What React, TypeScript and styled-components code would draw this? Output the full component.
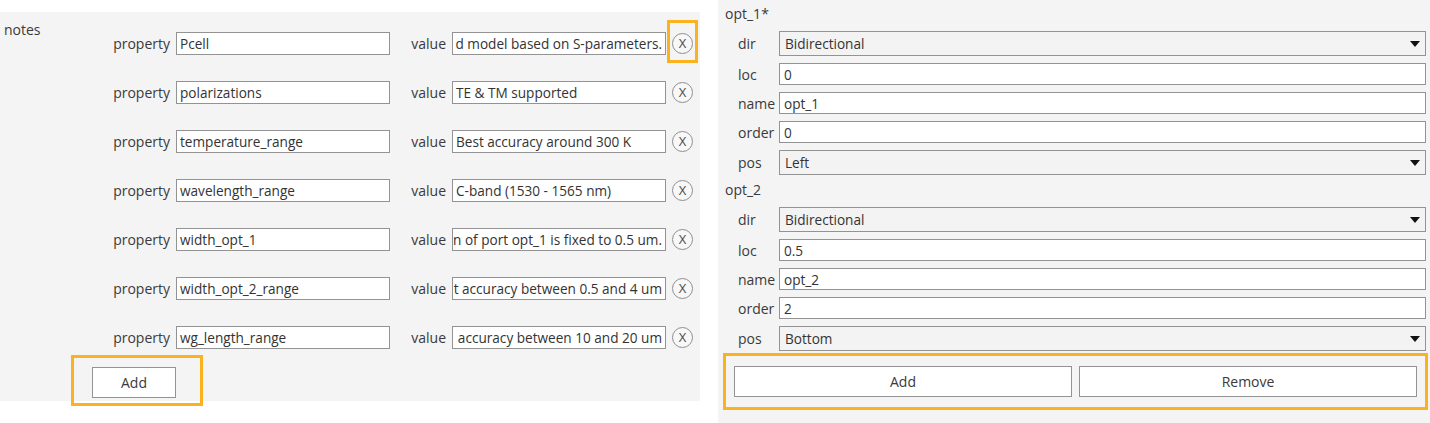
import styled, { createGlobalStyle } from "styled-components";

const GlobalStyle = createGlobalStyle`
  body {
    margin: 0;
    background: #ffffff;
    font-family: "Open Sans", "Liberation Sans", sans-serif;
    color: #333333;
  }
`;

// long values are shown scrolled to their end, as the line edit keeps the caret there
const notes = [
  { property: "Pcell", value: "d model based on S-parameters.", scrolled: true, marked: true },
  { property: "polarizations", value: "TE & TM supported" },
  { property: "temperature_range", value: "Best accuracy around 300 K" },
  { property: "wavelength_range", value: "C-band (1530 - 1565 nm)" },
  { property: "width_opt_1", value: "n of port opt_1 is fixed to 0.5 um.", scrolled: true },
  { property: "width_opt_2_range", value: "t accuracy between 0.5 and 4 um", scrolled: true },
  { property: "wg_length_range", value: "accuracy between 10 and 20 um", scrolled: true },
];

const ports = [
  { name: "opt_1", dirty: true, loc: "0", order: "0", pos: "Left" },
  { name: "opt_2", dirty: false, loc: "0.5", order: "2", pos: "Bottom" },
];

type NoteRow = { property: string; value: string; scrolled?: boolean; marked?: boolean };

function RemoveButton({ marked }: { marked?: boolean }) {
  return (
    <Marked>
      <SRoundButton type="button">X</SRoundButton>
      {marked && <SMark $top={13} $right={5} $bottom={9} $left={5} />}
    </Marked>
  );
}

function NotesPanel() {
  return (
    <SNotesPanel>
      <SNotesBody>
        <SSectionLabel>notes</SSectionLabel>
        <SNotesGrid>
          {notes.map((n: NoteRow) => (
            <NoteLine key={n.property} {...n} />
          ))}
        </SNotesGrid>
      </SNotesBody>
      <SNotesFooter>
        <Marked>
          <SPlainButton type="button" $width={84}>Add</SPlainButton>
          <SMark $top={12} $right={27} $bottom={8} $left={21} />
        </Marked>
      </SNotesFooter>
    </SNotesPanel>
  );
}

function NoteLine({ property, value, scrolled, marked }: NoteRow) {
  return (
    <>
      <SRowLabel>property</SRowLabel>
      <SField>
        <SFieldText>{property}</SFieldText>
      </SField>
      <SRowLabel>value</SRowLabel>
      <SField $scrolled={scrolled}>
        <SFieldText>{value}</SFieldText>
      </SField>
      <RemoveButton marked={marked} />
    </>
  );
}

function PortSection({ name, dirty, loc, order, pos }: (typeof ports)[number]) {
  return (
    <SPortSection>
      <SPortTitle>{name}{dirty ? "*" : ""}</SPortTitle>
      <SPortGrid>
        <SPortLabel>dir</SPortLabel>
        <SSelect>
          <SFieldText>Bidirectional</SFieldText>
          <SArrow />
        </SSelect>
        <SPortLabel>loc</SPortLabel>
        <SPortField><SFieldText>{loc}</SFieldText></SPortField>
        <SPortLabel>name</SPortLabel>
        <SPortField><SFieldText>{name}</SFieldText></SPortField>
        <SPortLabel>order</SPortLabel>
        <SPortField><SFieldText>{order}</SFieldText></SPortField>
        <SPortLabel>pos</SPortLabel>
        <SSelect>
          <SFieldText>{pos}</SFieldText>
          <SArrow />
        </SSelect>
      </SPortGrid>
    </SPortSection>
  );
}

function PortsPanel() {
  return (
    <SPortsPanel>
      {ports.map((p) => (
        <PortSection key={p.name} {...p} />
      ))}
      <SPortActions>
        <SPlainButton type="button">Add</SPlainButton>
        <SPlainButton type="button">Remove</SPlainButton>
        <SMark $top={13} $right={11} $bottom={13} $left={11} />
      </SPortActions>
    </SPortsPanel>
  );
}

export default function App() {
  return (
    <>
      <GlobalStyle />
      <SPage>
        <NotesPanel />
        <PortsPanel />
      </SPage>
    </>
  );
}

const SPage = styled.div`
  display: flex;
  align-items: flex-start;
  gap: 18px;
  width: 1430px;
  height: 423px;
  overflow: hidden;
`;

const SNotesPanel = styled.div`
  box-sizing: border-box;
  width: 700px;
  height: 389px;
  margin-top: 12px;
  padding: 9px 0 0 4px;
  background: #f4f4f4;
  font-size: 14px;
`;

const SNotesBody = styled.div`
  display: flex;
`;

const SSectionLabel = styled.div`
  width: 96px;
  line-height: 18px;
  color: #3a3a3a;
`;

const SNotesGrid = styled.div`
  display: grid;
  grid-template-columns: 70px 214px 50px 214px 21px;
  grid-auto-rows: 23px;
  column-gap: 6px;
  row-gap: 26px;
  align-items: center;
  padding-top: 11px;
`;

const SRowLabel = styled.span`
  justify-self: end;
  color: #3a3a3a;
  white-space: nowrap;
`;

const SField = styled.div<{ $scrolled?: boolean }>`
  box-sizing: border-box;
  display: flex;
  align-items: center;
  justify-content: ${(p) => (p.$scrolled ? "flex-end" : "flex-start")};
  height: 23px;
  padding: ${(p) => (p.$scrolled ? "0 3px 0 1px" : "0 3px")};
  overflow: hidden;
  background: #ffffff;
  border: 1px solid #939393;
`;

const SFieldText = styled.span`
  flex: none;
  white-space: nowrap;
  font-size: 13.6px;
  color: #333333;
`;

const Marked = styled.div`
  position: relative;
  display: flex;
`;

// orange highlight frame laid over a control
const SMark = styled.div<{ $top: number; $right: number; $bottom: number; $left: number }>`
  position: absolute;
  top: -${(p) => p.$top}px;
  right: -${(p) => p.$right}px;
  bottom: -${(p) => p.$bottom}px;
  left: -${(p) => p.$left}px;
  border: 3px solid #fbb21f;
  pointer-events: none;
`;

const SRoundButton = styled.button`
  box-sizing: border-box;
  width: 21px;
  height: 21px;
  padding: 0;
  border-radius: 50%;
  border: 1px solid #8e8e8e;
  background: #f8f8f8;
  color: #4a4a4a;
  font-family: inherit;
  font-size: 13px;
  line-height: 19px;
`;

const SNotesFooter = styled.div`
  display: flex;
  margin-top: 18px;
  padding-left: 88px;
`;

const SPlainButton = styled.button<{ $width?: number }>`
  box-sizing: border-box;
  ${(p) => (p.$width ? `width: ${p.$width}px;` : "flex: 1;")}
  height: 31px;
  padding: 0;
  background: #ffffff;
  border: 1px solid #939393;
  color: #3a3a3a;
  font-family: inherit;
  font-size: 14px;
`;

const SPortsPanel = styled.div`
  box-sizing: border-box;
  flex: 1;
  height: 423px;
  padding: 5px 4px 0 5px;
  background: #f4f4f4;
  font-size: 14px;
  display: flex;
  flex-direction: column;
  gap: 6px;
`;

const SPortSection = styled.div`
  display: flex;
  flex-direction: column;
  gap: 8px;
`;

const SPortTitle = styled.div`
  padding-left: 2px;
  line-height: 18px;
  color: #3a3a3a;
`;

const SPortGrid = styled.div`
  display: grid;
  grid-template-columns: 37px 1fr;
  column-gap: 4px;
  row-gap: 7px;
  align-items: center;
  padding-left: 15px;
`;

const SPortLabel = styled.span`
  color: #3a3a3a;
`;

const SPortField = styled.div`
  box-sizing: border-box;
  display: flex;
  align-items: center;
  height: 22px;
  padding: 0 4px;
  background: #ffffff;
  border: 1px solid #939393;
`;

const SSelect = styled(SPortField)`
  height: 25px;
  padding: 0 5px;
  justify-content: space-between;
  background: #f3f3f3;
`;

const SArrow = styled.span`
  width: 0;
  height: 0;
  border-left: 5px solid transparent;
  border-right: 5px solid transparent;
  border-top: 6px solid #111111;
`;

const SPortActions = styled.div`
  position: relative;
  display: flex;
  gap: 7px;
  margin: 9px 9px 0 11px;
`;
